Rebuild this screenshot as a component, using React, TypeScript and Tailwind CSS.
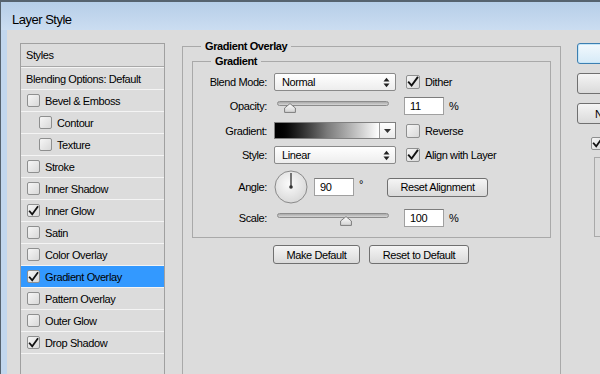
import React from "react";

function Check() {
  return (
    <svg width="12" height="12" viewBox="0 0 12 12" className="block">
      <path d="M1.8 6.4 L4.6 9.6 L10.4 1.6" fill="none" stroke="#111" strokeWidth="1.9" strokeLinecap="square" strokeLinejoin="miter" />
    </svg>
  );
}

function Box({ checked, small }: { checked?: boolean; small?: boolean }) {
  return (
    <div
      className={`${small ? "w-[13px] h-[13px]" : "w-[14px] h-[14px]"} shrink-0 rounded-[2px] border border-[#8e8f8f] bg-linear-to-br from-[#f6f6f6] to-[#d9d9d9] flex items-center justify-center`}
    >
      {checked ? <Check /> : null}
    </div>
  );
}

function UpDown() {
  return (
    <svg width="7" height="11" viewBox="0 0 7 11" className="block">
      <polygon points="0.5,4.5 3.5,0.8 6.5,4.5" fill="#222" />
      <polygon points="0.5,6.5 3.5,10.2 6.5,6.5" fill="#222" />
    </svg>
  );
}

function Select({ value }: { value: string }) {
  return (
    <div className="w-[122px] h-[18px] shrink-0 rounded-[2px] border border-[#8a8a8a] bg-linear-to-b from-white to-[#ededed] flex items-center justify-between pl-[7px] pr-[5px]">
      <span>{value}</span>
      <UpDown />
    </div>
  );
}

function Thumb() {
  return (
    <svg width="12" height="10" viewBox="0 0 12 10" className="block">
      <defs>
        <linearGradient id="tg" x1="0" y1="0" x2="0" y2="1">
          <stop offset="0" stopColor="#ffffff" />
          <stop offset="1" stopColor="#d2d2d2" />
        </linearGradient>
      </defs>
      <polygon points="6,0.6 11.4,5 11.4,9.4 0.6,9.4 0.6,5" fill="url(#tg)" stroke="#7c7c7c" strokeWidth="1" strokeLinejoin="round" />
    </svg>
  );
}

function Slider({ thumbClass }: { thumbClass: string }) {
  return (
    <div className="relative w-[122px] h-[18px] shrink-0">
      <div className="absolute left-[3px] top-[4px] w-[112px] h-[5px] rounded-full border border-[#8c8c8c] bg-linear-to-b from-[#a9a9a9] to-[#d6d6d6]" />
      <div className={`absolute ${thumbClass}`}>
        <Thumb />
      </div>
    </div>
  );
}

function Input({ value }: { value: string }) {
  return (
    <div className="w-[40px] h-[18px] shrink-0 border border-[#a0a0a0] border-t-[#7d7d7d] bg-white flex items-center pl-[5px]">
      {value}
    </div>
  );
}

function Btn({ label, cls }: { label: string; cls: string }) {
  return (
    <div
      className={`${cls} h-[19px] shrink-0 rounded-[3px] border border-[#707070] bg-linear-to-b from-[#f5f5f5] to-[#dadada] flex items-center justify-center`}
    >
      {label}
    </div>
  );
}

function Label({ text }: { text: string }) {
  return <div className="w-[75px] shrink-0 text-right pr-[1px]">{text}</div>;
}

function CheckLabel({ text, checked }: { text: string; checked?: boolean }) {
  return (
    <div className="flex items-center ml-[10px]">
      <Box checked={checked} />
      <span className="ml-[5px]">{text}</span>
    </div>
  );
}

function Dial() {
  return (
    <svg width="34" height="34" viewBox="0 0 34 34" className="block shrink-0">
      <defs>
        <radialGradient id="dg" cx="0.45" cy="0.4" r="0.65">
          <stop offset="0" stopColor="#fbfbfb" />
          <stop offset="1" stopColor="#d6d6d6" />
        </radialGradient>
      </defs>
      <circle cx="17" cy="17" r="16" fill="url(#dg)" stroke="#8a8a8a" strokeWidth="1" />
      <line x1="17" y1="17" x2="17" y2="3" stroke="#333" strokeWidth="1.3" />
      <circle cx="17" cy="17" r="1.8" fill="#333" />
    </svg>
  );
}

const rows: { label: string; checked?: boolean; indent?: boolean; selected?: boolean }[] = [
  { label: "Bevel & Emboss" },
  { label: "Contour", indent: true },
  { label: "Texture", indent: true },
  { label: "Stroke" },
  { label: "Inner Shadow" },
  { label: "Inner Glow", checked: true },
  { label: "Satin" },
  { label: "Color Overlay" },
  { label: "Gradient Overlay", checked: true, selected: true },
  { label: "Pattern Overlay" },
  { label: "Outer Glow" },
  { label: "Drop Shadow", checked: true },
];

export default function App() {
  return (
    <div className="w-[600px] h-[374px] overflow-hidden flex flex-col font-['Liberation_Sans',Arial,sans-serif] text-[11px] leading-[14px] tracking-[-0.4px] text-black bg-[#dcdcdc]">
      {/* Title bar */}
      <div className="h-[30px] shrink-0 border-t-2 border-l border-[#56636f] bg-linear-to-b from-[#b6cee8] to-[#cbddf1] flex items-center pl-[11px] pt-[8px]">
        <span className="text-[13px] leading-[16px] tracking-[-0.5px]">Layer Style</span>
      </div>

      {/* Body */}
      <div className="flex flex-1 min-h-0">
        <div className="w-[7px] shrink-0 border-l border-[#56636f] bg-[#c2d7ee]" />
        <div className="flex-1 flex items-start bg-[#dcdcdc]">
          {/* Styles list */}
          <div className="ml-[13px] mt-[13px] w-[145px] h-[340px] shrink-0 border border-[#a0a0a0] flex flex-col">
            <div className="h-[22px] flex items-center pl-[5px]">Styles</div>
            <div className="h-[2px] border-t border-[#a8a8a8] border-b border-b-[#f4f4f4]" />
            <div className="h-[22px] flex items-center pl-[5px] border-b border-[#f4f4f4]">Blending Options: Default</div>
            {rows.map((r) => (
              <div
                key={r.label}
                className={`h-[22px] shrink-0 flex items-center border-b border-[#f4f4f4] ${r.indent ? "pl-[18px]" : "pl-[6px]"} ${r.selected ? "bg-[#3399ff]" : ""}`}
              >
                <Box small checked={r.checked} />
                <span className="ml-[5px]">{r.label}</span>
              </div>
            ))}
          </div>

          {/* Gradient Overlay group */}
          <div className="relative ml-[17px] mt-[16px] w-[379px] h-[340px] shrink-0 border-t border-l border-r border-[#a9a9a9]">
            <span className="absolute left-[18px] top-[-8px] px-[4px] bg-[#dcdcdc] font-bold">Gradient Overlay</span>

            <div className="relative ml-[9px] mt-[14px] w-[359px] h-[177px] border border-[#a9a9a9] flex flex-col">
              <span className="absolute left-[18px] top-[-8px] px-[4px] bg-[#dcdcdc] font-bold">Gradient</span>

              <div className="mt-[11px] h-[18px] flex items-center">
                <Label text="Blend Mode:" />
                <div className="ml-[6px]">
                  <Select value="Normal" />
                </div>
                <CheckLabel text="Dither" checked />
              </div>

              <div className="mt-[6px] h-[18px] flex items-center">
                <Label text="Opacity:" />
                <div className="ml-[6px]">
                  <Slider thumbClass="left-[10px] top-[6px]" />
                </div>
                <div className="ml-[8px]">
                  <Input value="11" />
                </div>
                <span className="ml-[5px]">%</span>
              </div>

              <div className="mt-[7px] h-[17px] flex items-center">
                <Label text="Gradient:" />
                <div className="ml-[6px] w-[122px] h-[17px] shrink-0 border border-[#808080] flex">
                  <div className="flex-1 bg-linear-to-r from-black via-[#7a7a7a] to-white" />
                  <div className="w-[16px] border-l border-[#9a9a9a] bg-linear-to-b from-white to-[#eaeaea] flex items-center justify-center">
                    <svg width="7" height="4" viewBox="0 0 7 4" className="block">
                      <polygon points="0,0 7,0 3.5,4" fill="#333" />
                    </svg>
                  </div>
                </div>
                <CheckLabel text="Reverse" />
              </div>

              <div className="mt-[7px] h-[18px] flex items-center">
                <Label text="Style:" />
                <div className="ml-[6px]">
                  <Select value="Linear" />
                </div>
                <CheckLabel text="Align with Layer" checked />
              </div>

              <div className="mt-[6px] h-[34px] flex items-center">
                <Label text="Angle:" />
                <div className="ml-[6px]">
                  <Dial />
                </div>
                <div className="ml-[6px]">
                  <Input value="90" />
                </div>
                <span className="w-[33px] shrink-0 pl-[5px] self-start mt-[7px]">°</span>
                <Btn label="Reset Alignment" cls="w-[101px]" />
              </div>

              <div className="mt-[5px] h-[18px] flex items-center">
                <Label text="Scale:" />
                <div className="ml-[6px]">
                  <Slider thumbClass="left-[66px] top-[7px]" />
                </div>
                <div className="ml-[8px]">
                  <Input value="100" />
                </div>
                <span className="ml-[5px]">%</span>
              </div>
            </div>

            <div className="flex ml-[90px] mt-[7px] gap-[9px]">
              <Btn label="Make Default" cls="w-[87px]" />
              <Btn label="Reset to Default" cls="w-[100px]" />
            </div>
          </div>

          {/* Right column */}
          <div className="ml-[16px] mt-[13px] w-[90px] shrink-0 flex flex-col">
            <div className="h-[21px] rounded-[3px] border border-[#3c7fb1] bg-linear-to-b from-[#f2f9fd] to-[#d6eaf7] shadow-[inset_0_0_0_1px_#c6e6f8] flex items-center justify-center">
              OK
            </div>
            <div className="mt-[9px] h-[21px] rounded-[3px] border border-[#707070] bg-linear-to-b from-[#f5f5f5] to-[#dadada] flex items-center justify-center">
              Cancel
            </div>
            <div className="mt-[9px] h-[21px] rounded-[3px] border border-[#707070] bg-linear-to-b from-[#f5f5f5] to-[#dadada] flex items-center justify-center">
              New Style...
            </div>
            <div className="mt-[12px] ml-[14px] flex items-center">
              <Box small checked />
              <span className="ml-[5px]">Preview</span>
            </div>
            <div className="mt-[7px] ml-[17px] w-[60px] h-[80px] border border-[#a9a9a9]" />
          </div>
        </div>
      </div>
    </div>
  );
}
